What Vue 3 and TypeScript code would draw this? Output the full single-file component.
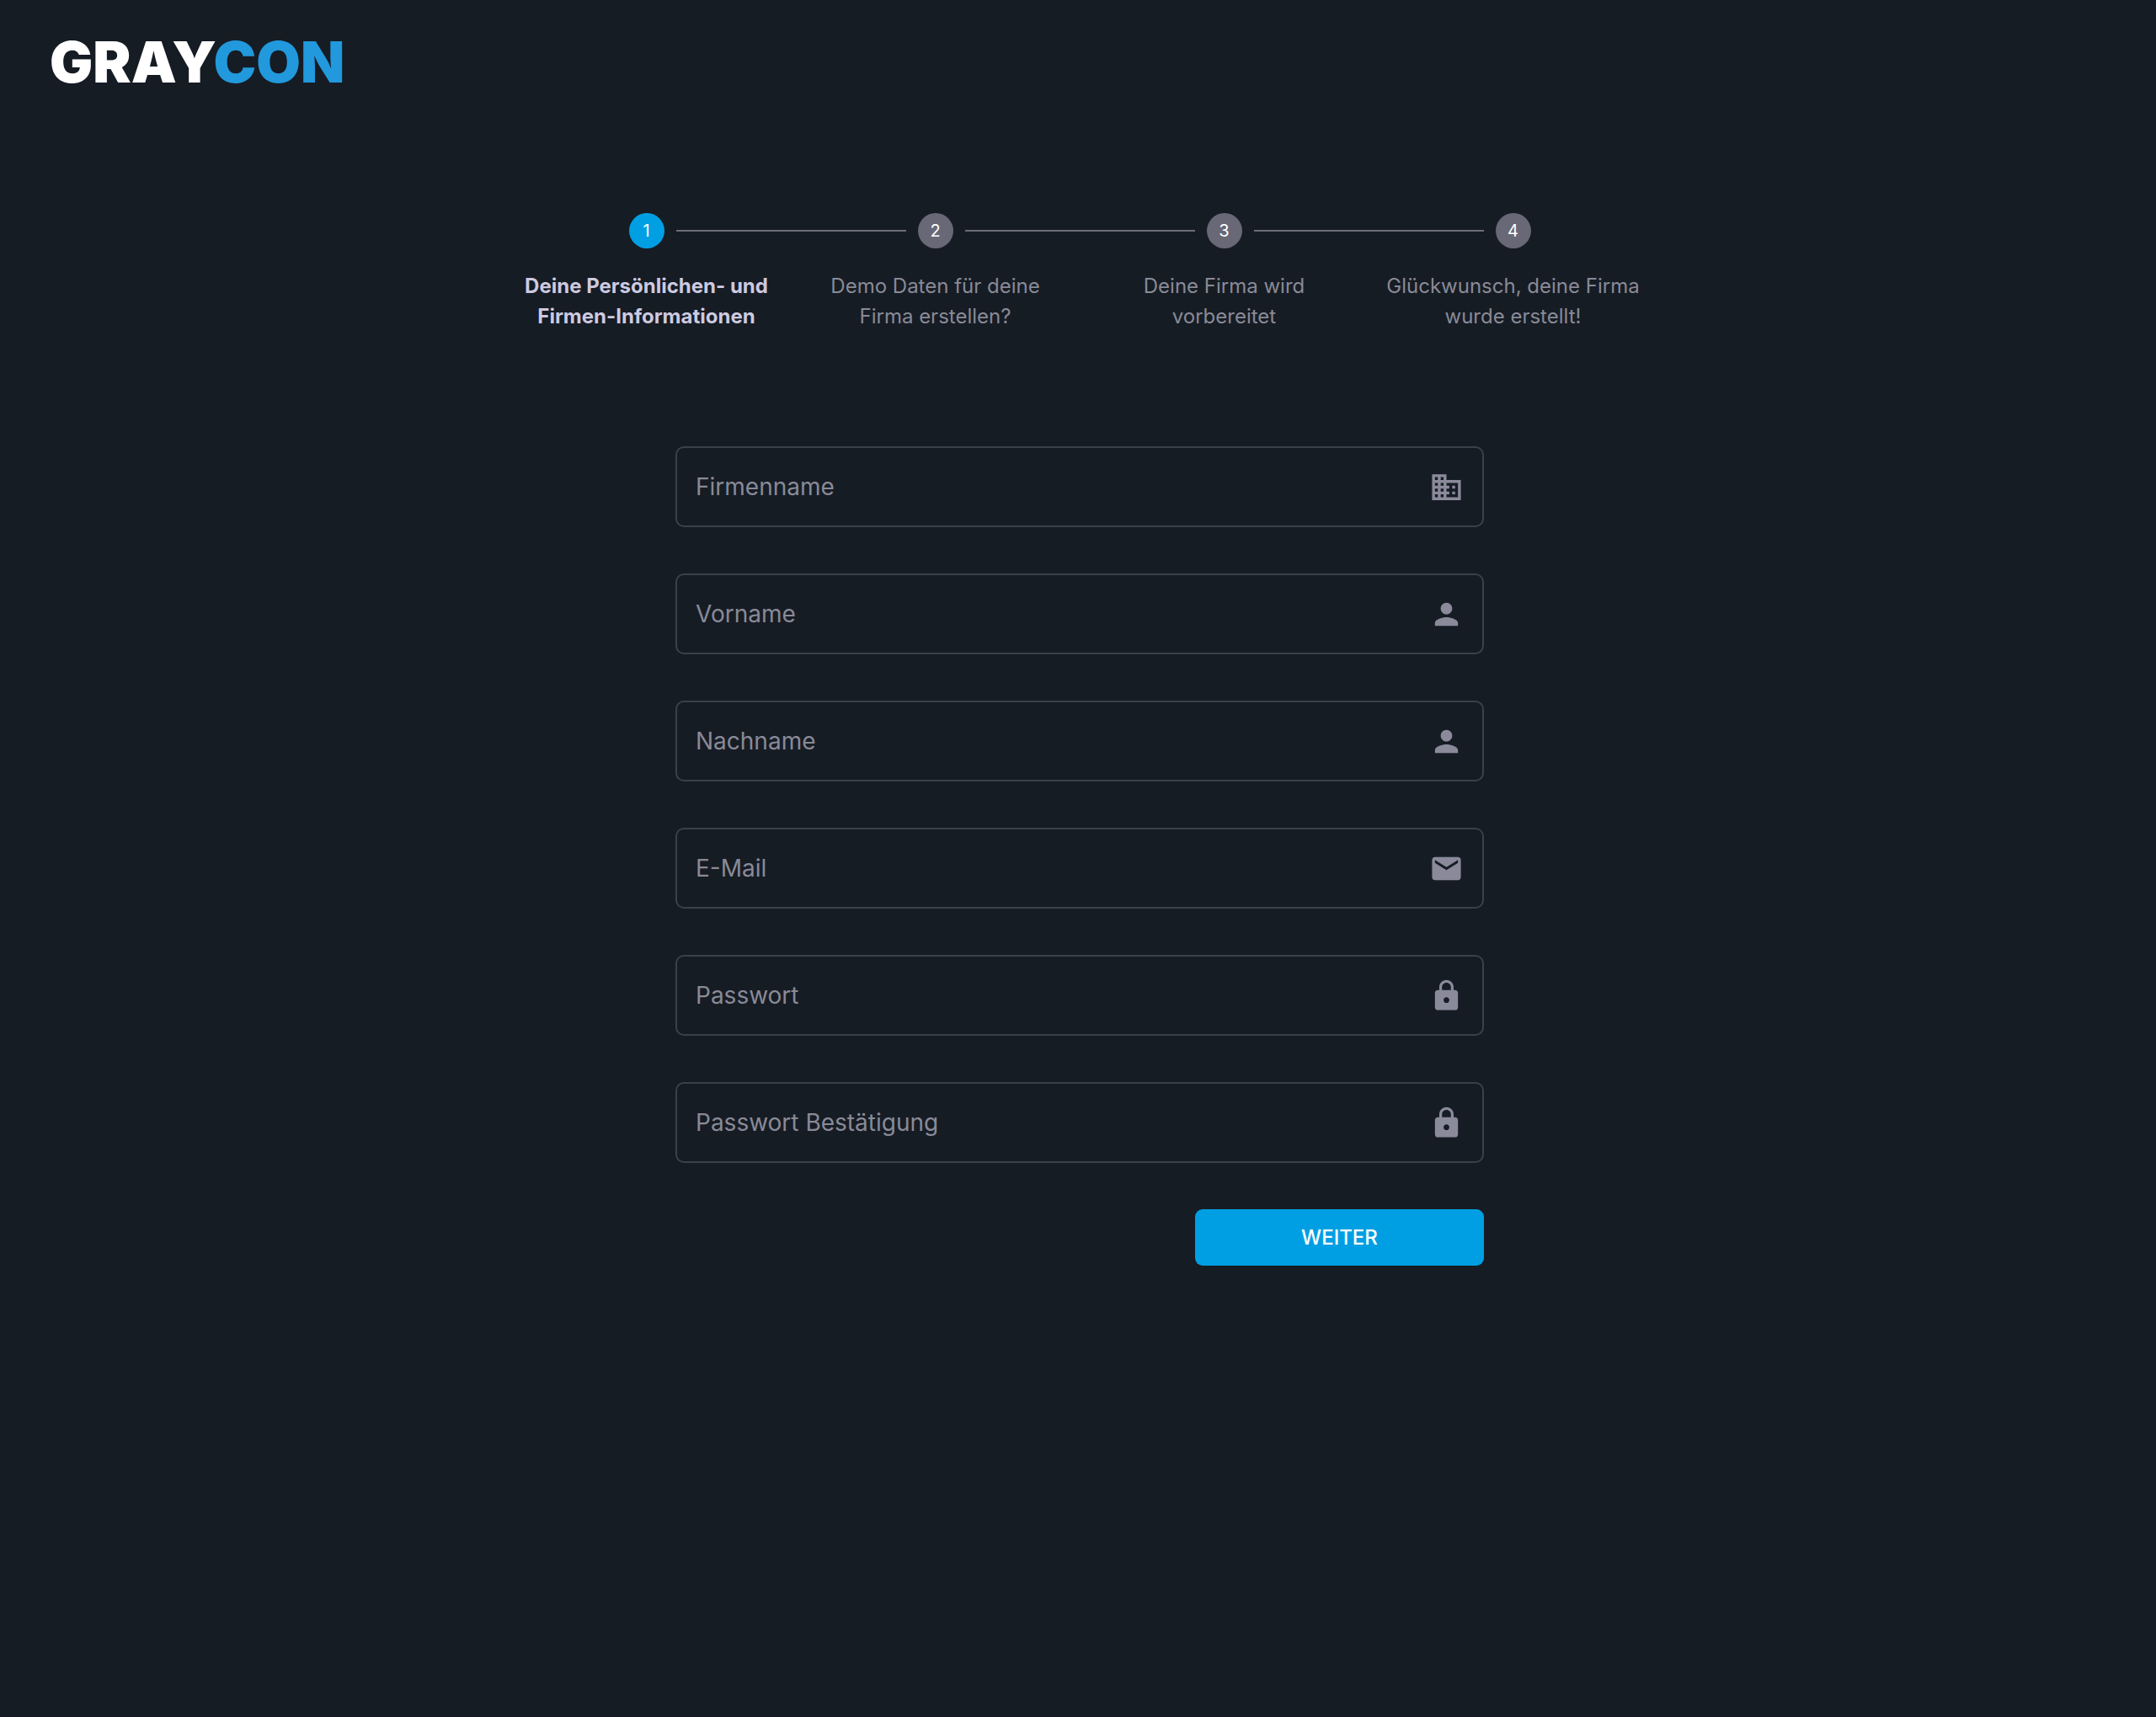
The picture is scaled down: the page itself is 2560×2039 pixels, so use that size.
<script setup lang="ts">
import { ref, reactive } from 'vue'

interface Field {
  id: string
  label: string
  type: string
  icon: string
}

const icons: Record<string, string> = {
  business:
    'M12 7V3H2v18h20V7H12zM6 19H4v-2h2v2zm0-4H4v-2h2v2zm0-4H4V9h2v2zm0-4H4V5h2v2zm4 12H8v-2h2v2zm0-4H8v-2h2v2zm0-4H8V9h2v2zm0-4H8V5h2v2zm10 12h-8v-2h2v-2h-2v-2h2v-2h-2V9h8v10zm-2-8h-2v2h2v-2zm0 4h-2v2h2v-2z',
  person:
    'M12 12c2.21 0 4-1.79 4-4s-1.79-4-4-4-4 1.79-4 4 1.79 4 4 4zm0 2c-2.67 0-8 1.34-8 4v2h16v-2c0-2.66-5.33-4-8-4z',
  mail: 'M20 4H4c-1.1 0-1.99.9-1.99 2L2 18c0 1.1.9 2 2 2h16c1.1 0 2-.9 2-2V6c0-1.1-.9-2-2-2zm0 4l-8 5-8-5V6l8 5 8-5v2z',
  lock: 'M18 8h-1V6c0-2.76-2.24-5-5-5S7 3.24 7 6v2H6c-1.1 0-2 .9-2 2v10c0 1.1.9 2 2 2h12c1.1 0 2-.9 2-2V10c0-1.1-.9-2-2-2zm-6 9c-1.1 0-2-.9-2-2s.9-2 2-2 2 .9 2 2-.9 2-2 2zm3.1-9H8.9V6c0-1.71 1.39-3.1 3.1-3.1 1.71 0 3.1 1.39 3.1 3.1v2z',
}

const steps: string[] = [
  'Deine Persönlichen- und Firmen-Informationen',
  'Demo Daten für deine Firma erstellen?',
  'Deine Firma wird vorbereitet',
  'Glückwunsch, deine Firma wurde erstellt!',
]

const fields: Field[] = [
  { id: 'company', label: 'Firmenname', type: 'text', icon: 'business' },
  { id: 'firstname', label: 'Vorname', type: 'text', icon: 'person' },
  { id: 'lastname', label: 'Nachname', type: 'text', icon: 'person' },
  { id: 'email', label: 'E-Mail', type: 'email', icon: 'mail' },
  { id: 'password', label: 'Passwort', type: 'password', icon: 'lock' },
  { id: 'confirm', label: 'Passwort Bestätigung', type: 'password', icon: 'lock' },
]

const activeStep = ref(0)
const values = reactive<Record<string, string>>({})
</script>

<template>
  <div class="page">
    <header class="header">
      <svg class="logo" viewBox="0 0 344 54" role="img" aria-label="GRAYCON">
        <text x="-3" y="52">GRAY<tspan class="logo-con">CON</tspan></text>
      </svg>
    </header>

    <main class="main">
      <ol class="stepper">
        <li
          v-for="(step, i) in steps"
          :key="step"
          class="step"
          :class="{ active: i === activeStep }"
        >
          <div class="track">
            <span class="line" :class="{ hidden: i === 0 }"></span>
            <span class="dot">{{ i + 1 }}</span>
            <span class="line" :class="{ hidden: i === steps.length - 1 }"></span>
          </div>
          <span class="step-label">{{ step }}</span>
        </li>
      </ol>

      <form class="form" @submit.prevent>
        <div v-for="field in fields" :key="field.id" class="field">
          <label :for="field.id" :class="{ filled: values[field.id] }">{{ field.label }}</label>
          <input :id="field.id" v-model="values[field.id]" :type="field.type" />
          <svg class="icon" viewBox="0 0 24 24" aria-hidden="true">
            <path :d="icons[field.icon]" />
          </svg>
        </div>
        <button type="submit" class="submit">WEITER</button>
      </form>
    </main>
  </div>
</template>

<style>
body {
  margin: 0;
  background: #161c24;
}
</style>

<style scoped>
.page {
  min-height: 100vh;
  box-sizing: border-box;
  background: #161c24;
  color: #898a97;
  font-family: Inter, 'Liberation Sans', sans-serif;
}

.header {
  display: flex;
  padding: 46px 62px 0;
}

.logo {
  width: 344px;
  height: 54px;
  overflow: visible;
  fill: #fff;
  font-size: 68px;
  font-weight: 900;
}

.logo-con {
  fill: #2199dc;
}

.main {
  display: flex;
  flex-direction: column;
  align-items: center;
  padding: 153px 0 80px 4px;
}

.stepper {
  display: flex;
  width: 100%;
  max-width: 1372px;
  margin: 0;
  padding: 0;
  list-style: none;
}

.step {
  flex: 1 1 0;
  display: flex;
  flex-direction: column;
  align-items: center;
  gap: 27px;
}

.track {
  display: flex;
  align-items: center;
  gap: 14px;
  width: 100%;
}

.line {
  flex: 1;
  height: 2px;
  background: #6b6d79;
}

.line.hidden {
  visibility: hidden;
}

.dot {
  display: flex;
  align-items: center;
  justify-content: center;
  width: 42px;
  height: 42px;
  border-radius: 50%;
  background: #686877;
  color: #fff;
  font-size: 20px;
}

.active .dot {
  background: #009fe3;
}

.step-label {
  max-width: 310px;
  font-size: 24px;
  line-height: 36px;
  text-align: center;
}

.active .step-label {
  color: #cdcae0;
  font-weight: 700;
}

.form {
  display: flex;
  flex-direction: column;
  gap: 55px;
  width: 100%;
  max-width: 960px;
  margin-top: 136px;
}

.field {
  display: grid;
  grid-template-columns: 1fr 41px;
  align-items: center;
  height: 96px;
  box-sizing: border-box;
  padding: 0 22px;
  border: 2px solid #3b4148;
  border-radius: 10px;
}

.field label,
.field input {
  grid-area: 1 / 1;
  font-size: 28px;
  line-height: 40px;
}

.field label {
  pointer-events: none;
}

.field label.filled {
  visibility: hidden;
}

.field input {
  width: 100%;
  box-sizing: border-box;
  padding: 0;
  border: 0;
  outline: 0;
  background: transparent;
  color: #cdcae0;
  font-family: inherit;
}

.icon {
  width: 41px;
  height: 41px;
  fill: #8a8a9b;
}

.submit {
  align-self: flex-end;
  width: 343px;
  height: 67px;
  border: 0;
  border-radius: 9px;
  background: #009fe3;
  color: #fff;
  font-family: inherit;
  font-size: 24px;
  font-weight: 500;
  cursor: pointer;
}
</style>
